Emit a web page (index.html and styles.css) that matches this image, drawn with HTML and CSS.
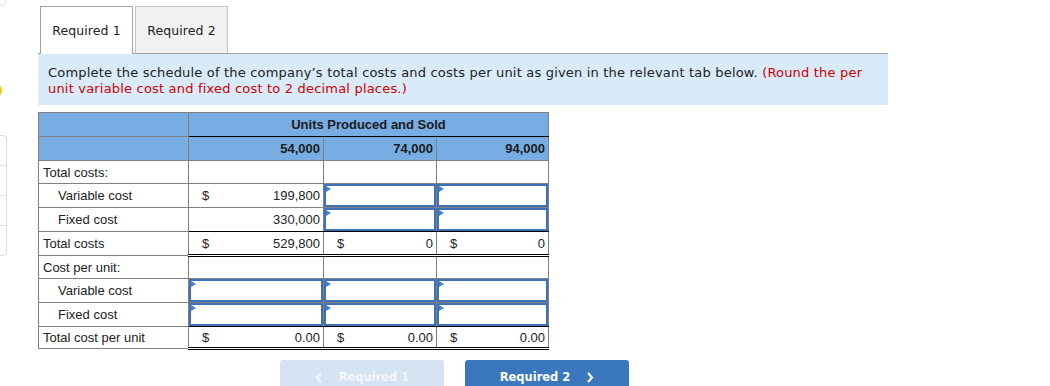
FILE: index.html
```html
<!DOCTYPE html>
<html>
<head>
<meta charset="utf-8">
<link rel="stylesheet" href="styles.css">
</head>
<body>
<div class="page">
  <aside class="gutter">
    <div class="peek-top"></div>
    <div class="dot"></div>
    <div class="peek-list">
      <div class="peek-item"></div>
      <div class="peek-item"></div>
      <div class="peek-item"></div>
      <div class="peek-item last"></div>
    </div>
  </aside>
  <main class="main">
    <div class="tabs">
      <div class="tab active">Required 1</div>
      <div class="tab">Required 2</div>
    </div>
    <div class="panel">
      <p class="instr">Complete the schedule of the company’s total costs and costs per unit as given in the relevant tab below. <span class="red">(Round the per<br>unit variable cost and fixed cost to 2 decimal places.)</span></p>
      <table class="sched">
        <colgroup>
          <col class="c-lbl"><col class="c-1"><col class="c-2"><col class="c-3">
        </colgroup>
        <tr class="h1">
          <th class="lbl"></th>
          <th colspan="3" class="title">Units Produced and Sold</th>
        </tr>
        <tr class="h2">
          <th class="lbl"></th>
          <th class="num">54,000</th>
          <th class="num">74,000</th>
          <th class="num">94,000</th>
        </tr>
        <tr class="r23">
          <td class="lbl">Total costs:</td><td></td><td></td><td></td>
        </tr>
        <tr>
          <td class="lbl ind">Variable cost</td>
          <td><div class="val"><span>$</span><span>199,800</span></div></td>
          <td class="in"><div class="box"></div></td>
          <td class="in"><div class="box"></div></td>
        </tr>
        <tr class="pre-total">
          <td class="lbl ind">Fixed cost</td>
          <td><div class="val"><span></span><span>330,000</span></div></td>
          <td class="in"><div class="box"></div></td>
          <td class="in"><div class="box"></div></td>
        </tr>
        <tr class="total">
          <td class="lbl">Total costs</td>
          <td><div class="val"><span>$</span><span>529,800</span></div></td>
          <td><div class="val"><span>$</span><span>0</span></div></td>
          <td><div class="val"><span>$</span><span>0</span></div></td>
        </tr>
        <tr class="r23">
          <td class="lbl">Cost per unit:</td><td></td><td></td><td></td>
        </tr>
        <tr>
          <td class="lbl ind">Variable cost</td>
          <td class="in"><div class="box"></div></td>
          <td class="in"><div class="box"></div></td>
          <td class="in"><div class="box"></div></td>
        </tr>
        <tr class="pre-total">
          <td class="lbl ind">Fixed cost</td>
          <td class="in"><div class="box"></div></td>
          <td class="in"><div class="box"></div></td>
          <td class="in"><div class="box"></div></td>
        </tr>
        <tr class="total r22">
          <td class="lbl">Total cost per unit</td>
          <td><div class="val"><span>$</span><span>0.00</span></div></td>
          <td><div class="val"><span>$</span><span>0.00</span></div></td>
          <td><div class="val"><span>$</span><span>0.00</span></div></td>
        </tr>
      </table>
      <div class="nav">
        <button class="btn prev"><svg width="8" height="11" viewBox="0 0 8 11"><path d="M6 1 L2 5.5 L6 10" fill="none" stroke="currentColor" stroke-width="2"/></svg><span>Required 1</span></button>
        <button class="btn next"><span>Required 2</span><svg width="8" height="11" viewBox="0 0 8 11"><path d="M2 1 L6 5.5 L2 10" fill="none" stroke="currentColor" stroke-width="2"/></svg></button>
      </div>
    </div>
  </main>
</div>
</body>
</html>
```

FILE: styles.css
```css
html, body {
  margin: 0;
  background: #fff;
}
body {
  font-family: "DejaVu Sans", Verdana, sans-serif;
  color: #222;
  overflow: hidden;
}
.page {
  display: flex;
  align-items: flex-start;
}
.gutter {
  width: 7px;
  flex: none;
  overflow: hidden;
  height: 386px;
}
.peek-top {
  width: 12px;
  height: 5px;
  margin-left: -7px;
  border-right: 1px solid #e0e0e0;
  border-bottom: 1px solid #e0e0e0;
  border-bottom-right-radius: 5px;
}
.dot {
  width: 15px;
  height: 15px;
  border-radius: 50%;
  background: #f5c400;
  margin-left: -13px;
  margin-top: 77px;
}
.peek-list {
  margin-top: 37px;
  margin-left: -10px;
  width: 15px;
  border: 1px solid #dcdcdc;
  border-radius: 4px;
}
.peek-item {
  height: 29px;
  border-bottom: 1px solid #e4e4e4;
}
.peek-item.last {
  border-bottom: none;
}
.main {
  margin-left: 31px;
  width: 850px;
  padding-top: 6px;
}
.tabs {
  display: flex;
  gap: 2px;
  padding-left: 2px;
}
.tab {
  width: 93px;
  height: 47px;
  box-sizing: border-box;
  border: 1px solid #c6c6c6;
  border-bottom: none;
  background: #f1f1f1;
  display: flex;
  align-items: center;
  justify-content: center;
  font-size: 12.5px;
  letter-spacing: 0.1px;
  color: #222;
}
.tab.active {
  background: #fff;
  border-color: #a3a3a3;
  height: 48px;
  margin-bottom: -1px;
  position: relative;
  z-index: 1;
}
.panel {
  border-top: 1px solid #a3a3a3;
}
.instr {
  margin: 0;
  background: #d9eaf8;
  padding: 11px 10px 8px;
  font-size: 13px;
  line-height: 16px;
  letter-spacing: 0.19px;
  color: #222;
}
.red {
  color: #c00;
}
.sched {
  margin-top: 7px;
  border-collapse: collapse;
  table-layout: fixed;
  width: 510px;
  font-family: "Liberation Sans", Arial, sans-serif;
  font-size: 13px;
  color: #222;
}
.c-lbl { width: 150px; }
.c-1 { width: 135px; }
.c-2 { width: 113px; }
.c-3 { width: 112px; }
.sched th, .sched td {
  border: 1px solid #808080;
  height: 24px;
  padding: 0;
  box-sizing: border-box;
}
.sched .r23 td {
  height: 23px;
}
.sched .r22 td {
  height: 22px;
}
.sched th {
  background: #77ade3;
  font-weight: bold;
  color: #1b1b1b;
}
.sched .title {
  text-align: center;
  border-bottom: 1px solid #000;
}
.sched .num {
  text-align: right;
  padding-right: 3px;
}
.sched .lbl {
  padding-left: 4px;
  text-align: left;
}
.sched .lbl.ind {
  padding-left: 19px;
}
.val {
  display: flex;
  justify-content: space-between;
  padding: 0 3px 0 13px;
}
.sched td.in {
  padding: 0;
}
.box {
  height: 23px;
  border: 2px solid #3f71b5;
  box-sizing: border-box;
  position: relative;
  background: #fff;
}
.box::before {
  content: "";
  position: absolute;
  left: 0;
  top: 0;
  border-left: 5px solid #3f80d6;
  border-top: 3px solid transparent;
  border-bottom: 3px solid transparent;
}
.pre-total td:not(.lbl) {
  border-bottom: 1px solid #000;
}
.total td:not(.lbl) {
  border-top: 1px solid #000;
  border-bottom: 3px double #000;
}
.nav {
  display: flex;
  gap: 21px;
  margin-top: 10px;
  margin-left: 242px;
}
.btn {
  width: 164px;
  height: 32px;
  border: none;
  border-radius: 3px;
  display: flex;
  align-items: flex-start;
  justify-content: center;
  gap: 16px;
  padding-top: 10px;
  font-family: "DejaVu Sans", Verdana, sans-serif;
  font-weight: bold;
  font-size: 11.5px;
  color: #fff;
}
.btn svg {
  margin-top: 2px;
}
.btn.prev {
  background: #d6e3f2;
  color: #f3f7fc;
}
.btn.next {
  background: #3a77bd;
}
```
